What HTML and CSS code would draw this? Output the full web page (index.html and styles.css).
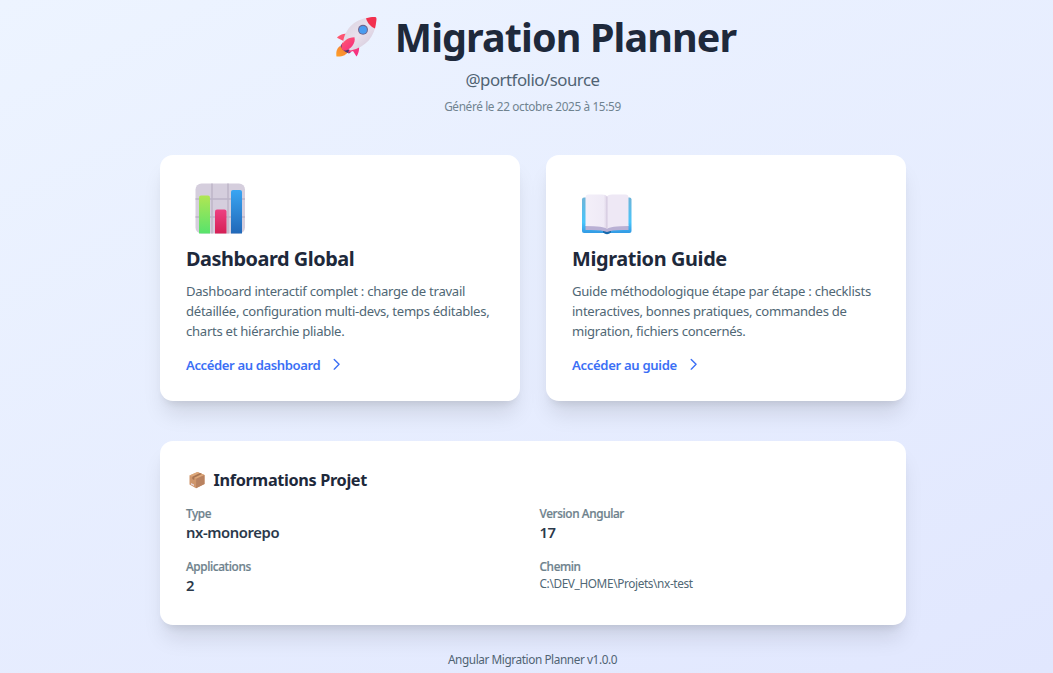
FILE: index.html
```html
<!DOCTYPE html>
<html lang="fr">
<head>
<meta charset="utf-8">
<title>Migration Planner</title>
<link rel="stylesheet" href="styles.css">
</head>
<body>
<main class="page">
  <header class="hero">
    <h1 class="hero-title">
      <svg class="rocket" viewBox="0 0 42 42" aria-hidden="true">
        <defs>
          <linearGradient id="hull" x1="0" y1="0" x2="1" y2="1"><stop offset="0" stop-color="#d8d0dd"/><stop offset=".5" stop-color="#e9e1ed"/><stop offset="1" stop-color="#cfc3d6"/></linearGradient>
          <linearGradient id="fin" x1="0" y1="0" x2="1" y2="1"><stop offset="0" stop-color="#ff5d6e"/><stop offset="1" stop-color="#f52a82"/></linearGradient>
          <linearGradient id="flame" x1="1" y1="0" x2="0" y2="1"><stop offset="0" stop-color="#f27b3e"/><stop offset="1" stop-color="#ffa024"/></linearGradient>
        </defs>
        <path d="M5 30C1 33 1 37 1.500 40.500C7 41 12 39 13 35Z" fill="url(#flame)"/>
        <path d="M7.500 27L16 36L14 37.500Q8 35.500 5.500 30Z" fill="#4a3570"/>
        <path d="M15 17.500C8 17.500 4 19 2 21.800L8.500 25L6 29.500L14 27ZM24 27C24.500 33 24 37 21.500 40.500L18 35L13 37L16 29Z" fill="url(#fin)"/>
        <path d="M8 27C9.500 13 20 1.500 38.500 1.200C41 1 41.500 2 41.200 4.500C40 21 31 31 15.500 34.500Z" fill="url(#hull)"/>
        <path d="M31 2.300C35 1.200 38 .9 40 1.100C41.500 1.200 41.700 2.300 41.300 5C41 7.500 40.600 10 40 12.500C36 11 32.200 7 31 2.300Z" fill="#f2304e"/>
        <path d="M6.500 30.500C8 25 12.500 21.500 19.500 21.200C21 27 15.500 33.500 10.500 34.500C8 34.500 6 33 6.500 30.500Z" fill="url(#fin)"/>
        <circle cx="28" cy="13.800" r="5" fill="#6e6790"/>
        <circle cx="28" cy="13.800" r="3.900" fill="#4a9cf0"/>
      </svg>
      <span>Migration Planner</span>
    </h1>
    <p class="hero-project">@portfolio/source</p>
    <p class="hero-date">Généré le 22 octobre 2025 à 15:59</p>
  </header>

  <section class="cards">
    <a class="card">
      <svg class="card-icon" viewBox="0 0 66 60" aria-hidden="true">
        <defs>
          <linearGradient id="green" x1="0" y1="0" x2="0" y2="1"><stop offset="0" stop-color="#b1e653"/><stop offset="1" stop-color="#57e36c"/></linearGradient>
          <linearGradient id="blue" x1="0" y1="0" x2="0" y2="1"><stop offset="0" stop-color="#3aa5f2"/><stop offset="1" stop-color="#2268b8"/></linearGradient>
          <linearGradient id="pink" x1="0" y1="0" x2="0" y2="1"><stop offset="0" stop-color="#ed4182"/><stop offset="1" stop-color="#d51f55"/></linearGradient>
        </defs>
        <rect x="9.500" y="4.500" width="49.500" height="50" rx="6" fill="#d5cedd"/>
        <path d="M26 4.500V54.500M42 4.500V54.500M9.500 20H59M9.500 38H59" fill="none" stroke="#bcb4c7" stroke-width="1.400"/>
        <path d="M13 54.500V18.500Q13 16.500 15 16.500H22Q24 16.500 24 18.500V54.500Z" fill="url(#green)"/>
        <path d="M29 54.500V32.500Q29 30.500 31 30.500H38.500Q40.500 30.500 40.500 32.500V54.500Z" fill="url(#pink)"/>
        <path d="M45 54.500V13Q45 11 47 11H54Q56 11 56 13V54.500Z" fill="url(#blue)"/>
      </svg>
      <h2 class="card-title">Dashboard Global</h2>
      <p class="card-text">Dashboard interactif complet : charge de travail détaillée, configuration multi-devs, temps éditables, charts et hiérarchie pliable.</p>
      <span class="card-link"><span class="dashboard-label">Accéder au dashboard</span>
        <svg class="chevron" viewBox="0 0 24 24"><path d="M9 5l7 7-7 7"/></svg></span>
    </a>
    <a class="card">
      <svg class="card-icon" viewBox="0 0 66 60" aria-hidden="true">
        <defs>
          <linearGradient id="cover" x1="0" y1="0" x2="0" y2="1"><stop offset="0" stop-color="#6fb4d8"/><stop offset=".7" stop-color="#48c5fb"/><stop offset="1" stop-color="#329ae4"/></linearGradient>
          <linearGradient id="leaf" x1="0" y1="0" x2="1" y2="0"><stop offset="0" stop-color="#f3eff9"/><stop offset=".85" stop-color="#efeaf6"/><stop offset="1" stop-color="#ddd3e6"/></linearGradient>
        </defs>
        <rect x="10" y="18.500" width="49.500" height="35.500" rx="2" fill="url(#cover)"/>
        <path d="M31 51.500H39V53.500Q35 57 31 53.500Z" fill="#1769ac"/>
        <path d="M13.500 46H56.500V51Q40 50.500 35 53Q30 50.500 13.500 51Z" fill="#b9b0d4"/>
        <path d="M13.500 18.500Q13.500 15.500 16.500 15.500H30Q34 15.500 35 17.500V50Q32 47 13.500 47Z" fill="url(#leaf)"/>
        <path d="M56.500 18.500Q56.500 15.500 53.500 15.500H40Q36 15.500 35 17.500V50Q38 47 56.500 47Z" fill="#eee8f5"/>
        <path d="M35 17.500V50" stroke="#d3c8df" stroke-width="1"/>
      </svg>
      <h2 class="card-title guide-title">Migration Guide</h2>
      <p class="card-text">Guide méthodologique étape par étape : checklists interactives, bonnes pratiques, commandes de migration, fichiers concernés.</p>
      <span class="card-link"><span>Accéder au guide</span>
        <svg class="chevron" viewBox="0 0 24 24"><path d="M9 5l7 7-7 7"/></svg></span>
    </a>
  </section>

  <section class="info">
    <h3 class="info-title">
      <svg class="box" viewBox="0 0 18 18" aria-hidden="true">
        <path d="M1.500 4.500L9.500 1L16.500 4V13L8 17.200L1.500 13.500Z" fill="#cf966c"/>
        <path d="M1.500 4.500L9.500 1L16.500 4L8.200 7.800Z" fill="#dda779"/>
        <path d="M8.200 7.800L16.500 4V13L8 17.200Z" fill="#b98260"/>
        <path d="M4.300 5.800L12 2.100L14 3L6.200 6.800V9L4.300 8Z" fill="#a87452"/>
        <path d="M3 12L6 13.500V15L3 13.500Z" fill="#e8d6da"/>
      </svg>
      <span>Informations Projet</span>
    </h3>
    <dl class="facts">
      <div class="fact"><dt>Type</dt><dd>nx-monorepo</dd></div>
      <div class="fact"><dt>Version Angular</dt><dd>17</dd></div>
      <div class="fact"><dt>Applications</dt><dd>2</dd></div>
      <div class="fact"><dt>Chemin</dt><dd class="path">C:\DEV_HOME\Projets\nx-test</dd></div>
    </dl>
  </section>
  <footer class="footer">Angular Migration Planner v1.0.0</footer>
</main>
</body>
</html>
```
FILE: styles.css
```css
* { box-sizing: border-box; }
h1, h2, h3, p, dl, dt, dd { margin: 0; }
body {
  margin: 0;
  height: 673px;
  overflow: hidden;
  font-family: "Noto Sans", "Open Sans", sans-serif;
  color: #1e293b;
  background: linear-gradient(155deg, #edf4ff 0%, #e1e7fe 100%);
}
.page { padding: 0 147.500px 0 159.500px; }
.hero { height: 155px; padding-top: 13px; text-align: center; }
.hero-title {
  display: flex; justify-content: center; align-items: center; gap: 18px;
  height: 48px; padding-left: 6px;
  font-size: 39.5px; line-height: 48px; font-weight: 700; letter-spacing: -.9px; white-space: nowrap;
}
.rocket { width: 42px; height: 42px; flex: none; }
.hero-project { margin-top: 5px; font-size: 16.8px; line-height: 27px; letter-spacing: -.48px; color: #506373; }
.hero-date { margin-top: 4px; font-size: 11.8px; line-height: 18px; letter-spacing: -.36px; color: #708390; }
.cards { display: grid; grid-template-columns: 1fr 1fr; gap: 26px; height: 246.400px; }
.card, .info {
  background: #fff; border-radius: 13px; padding: 24px 26.500px;
  box-shadow: 0 16.600px 20.800px -4.200px rgba(0, 0, 0, .1), 0 6.600px 8.300px -5px rgba(0, 0, 0, .1);
}
.card { display: flex; flex-direction: column; align-items: flex-start; }
.card-icon { width: 66px; height: 60px; flex: none; }
.card-title { margin-top: 6px; font-size: 19.9px; line-height: 28px; font-weight: 700; letter-spacing: -.47px; }
.guide-title { letter-spacing: -.38px; }
.card-text { margin: 8px -10px 0 0; font-size: 13.1px; line-height: 20px; letter-spacing: -.28px; color: #506775; }
.card-link { display: flex; align-items: center; gap: 8px; margin-top: 14px; height: 20px; font-size: 13.1px; font-weight: 600; letter-spacing: -.32px; color: #3b6ff5; }
.dashboard-label { letter-spacing: -.39px; }
.chevron { width: 16.600px; height: 16.600px; margin-top: -1px; fill: none; stroke: currentColor; stroke-width: 2; stroke-linecap: round; stroke-linejoin: round; }
.info { margin-top: 40px; height: 184px; padding-top: 26.500px; }
.info-title { display: flex; align-items: center; gap: 7.500px; padding-left: 2px; height: 24px; font-size: 16.3px; font-weight: 700; letter-spacing: -.36px; }
.box { width: 18px; height: 18px; }
.facts { display: grid; grid-template-columns: 1fr 1fr; column-gap: 14px; grid-auto-rows: 53.500px; margin-top: 12px; }
.fact dt { font-size: 11.8px; line-height: 18px; font-weight: 500; letter-spacing: -.38px; color: #6d818c; -webkit-text-stroke: .2px currentColor; }
.fact dd { font-size: 14.8px; line-height: 20px; font-weight: 600; letter-spacing: -.4px; color: #2b394b; }
.fact .path { font-size: 11.8px; line-height: 16px; font-weight: 400; letter-spacing: -.37px; color: #506775; }
.footer { margin-top: 25px; text-align: center; font-size: 11.8px; line-height: 18px; letter-spacing: -.42px; color: #506373; }
```
